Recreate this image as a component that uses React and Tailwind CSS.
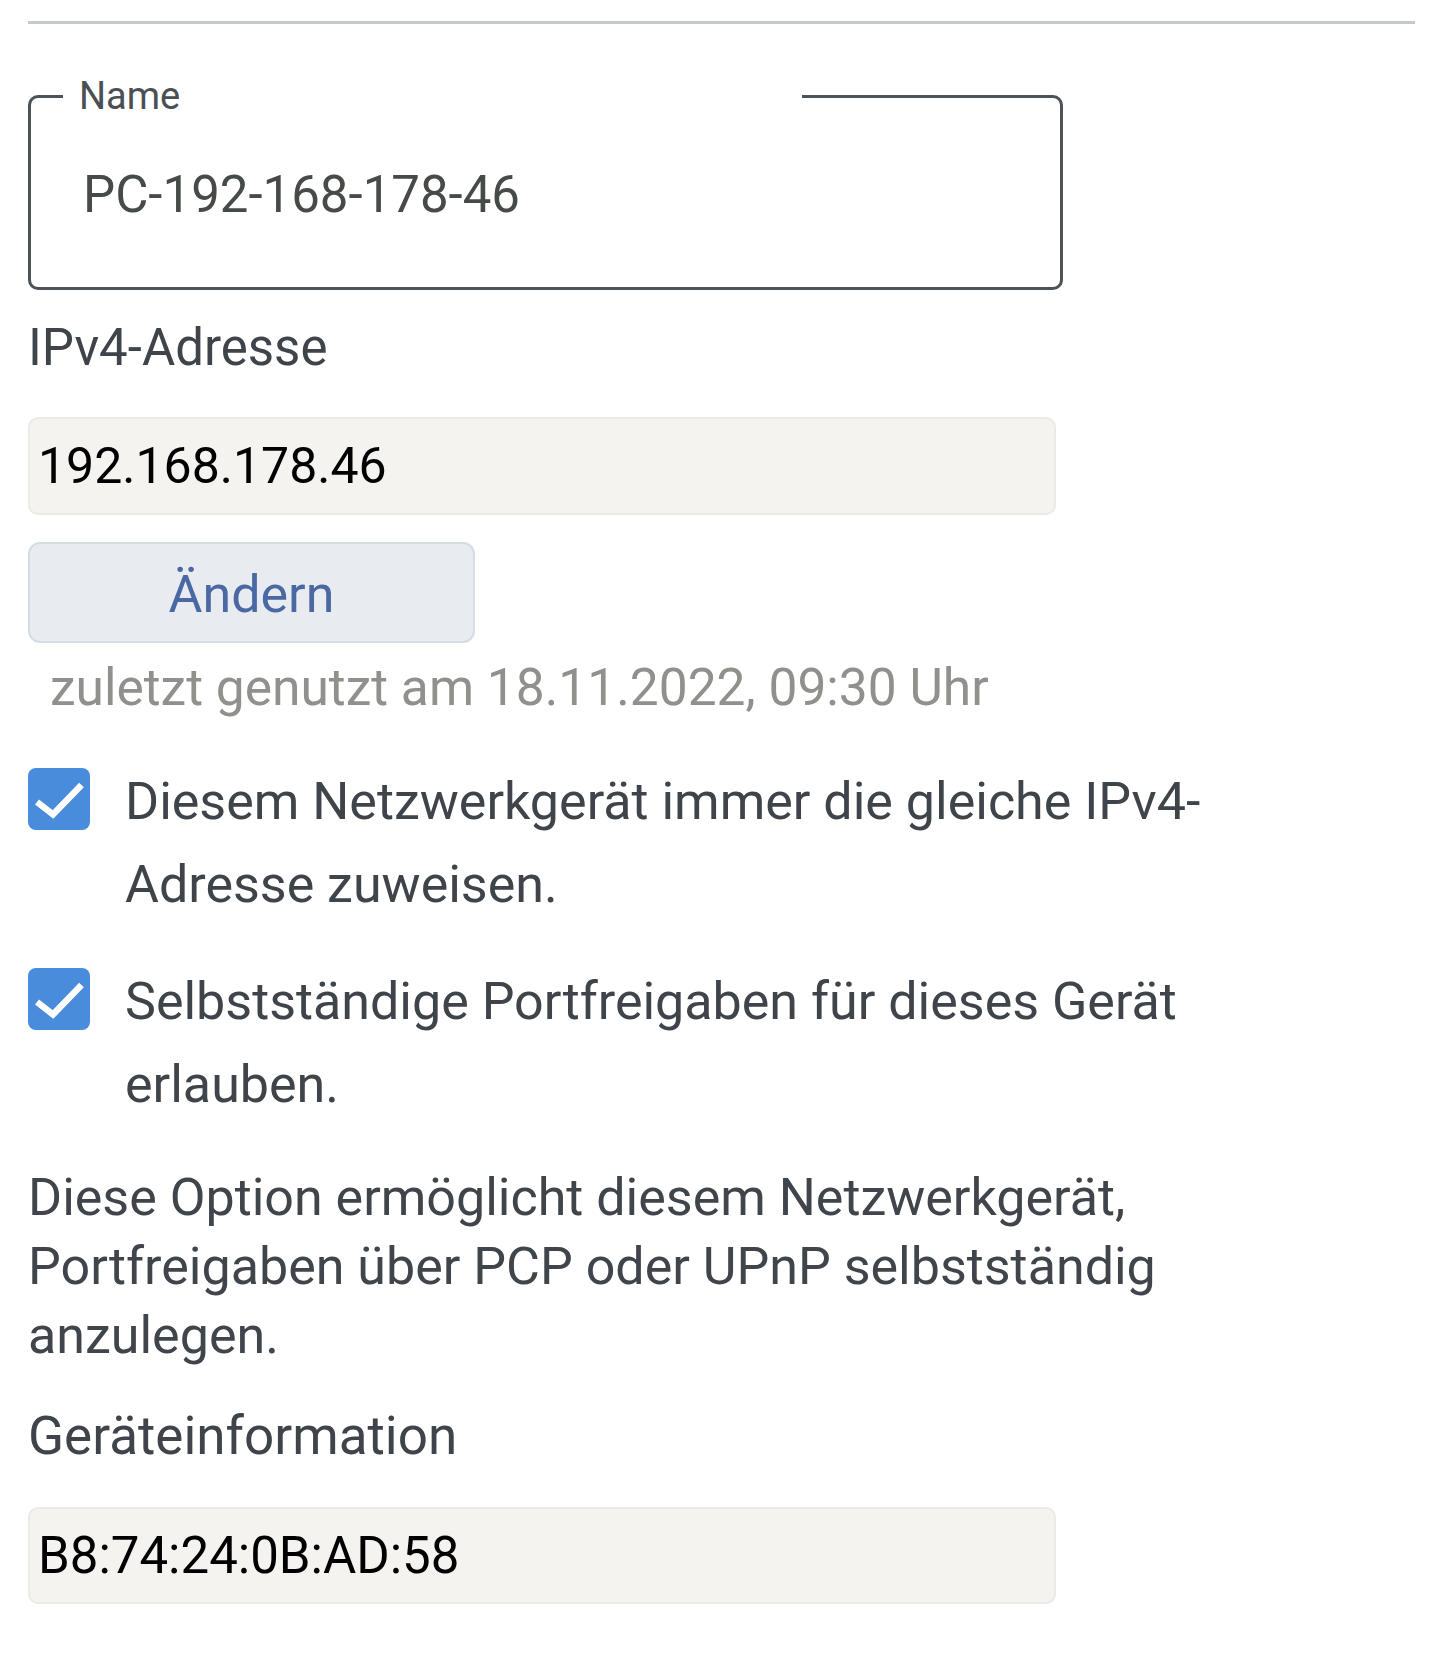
import React, { useState } from "react";

function Checkbox({ checked, onChange }) {
  return (
    <span
      role="checkbox"
      aria-checked={checked}
      onClick={() => onChange(!checked)}
      className={`mt-[8px] shrink-0 w-[62px] h-[62px] rounded-[8px] flex items-center justify-center cursor-pointer ${checked ? "bg-[#4a8cdc]" : "bg-white border-2 border-[#8a9097]"}`}
    >
      {checked ? (
        <svg viewBox="0 0 62 62" className="w-[62px] h-[62px]">
          <path d="M9 34 L25 46.5 L53.5 17" fill="none" stroke="#ffffff" strokeWidth="6.5" />
        </svg>
      ) : ""}
    </span>
  );
}

function App() {
  const [sameIp, setSameIp] = useState(true)
  const [portShare, setPortShare] = useState(true)

  return (
    <div className="min-h-[1655px] bg-white font-['Roboto',_'Liberation_Sans',_sans-serif] pl-[28px] pr-[24px] pt-[21px]">
      <div className="h-[3px] bg-[#c4caca]"></div>

      <div className="relative mt-[71px] w-[1035px] h-[195px] border-[3px] border-[#4d5258] rounded-[10px] flex items-center">
        <span className="absolute -top-[22px] left-[32px] w-[739px] bg-white pl-[16px] text-[38px] leading-[40px] text-[#4a4f54]">Name</span>
        <span className="pl-[52px] pt-[4px] text-[51px] leading-[60px] text-[#464b47]">PC-192-168-178-46</span>
      </div>

      <p className="mt-[28px] text-[51px] leading-[60px] text-[#3e444a]">IPv4-Adresse</p>
      <div className="mt-[39px] w-[1028px] h-[98px] rounded-[10px] border-2 border-[#ebeae6] bg-[#f4f3f0] flex items-center pl-[8px] text-[50px] leading-[60px] text-black">
        192.168.178.46
      </div>

      <button className="block mt-[27px] w-[447px] h-[101px] rounded-[12px] border-2 border-[#d5dde4] bg-[#e8ecf0] pt-[4px] text-[52px] leading-[60px] text-[#4a68a3] cursor-pointer">
        Ändern
      </button>
      <p className="mt-[15px] ml-[22px] text-[51.5px] leading-[60px] text-[#90908c]">zuletzt genutzt am 18.11.2022, 09:30 Uhr</p>

      <div className="mt-[42px] flex items-start gap-[35px]">
        <Checkbox checked={sameIp} onChange={setSameIp} />
        <p className="text-[52px] leading-[83px] text-[#3e444a]">Diesem Netzwerkgerät immer die gleiche IPv4-<br />Adresse zuweisen.</p>
      </div>
      <div className="mt-[34px] flex items-start gap-[35px]">
        <Checkbox checked={portShare} onChange={setPortShare} />
        <p className="text-[52px] leading-[83px] text-[#3e444a]">Selbstständige Portfreigaben für dieses Gerät<br />erlauben.</p>
      </div>

      <p className="mt-[37px] text-[52px] leading-[69px] text-[#3f454b]">
        Diese Option ermöglicht diesem Netzwerkgerät,<br />
        Portfreigaben über PCP oder UPnP selbstständig<br />
        anzulegen.
      </p>

      <p className="mt-[36px] text-[53px] leading-[60px] text-[#3e444a]">Geräteinformation</p>
      <div className="mt-[41px] w-[1028px] h-[97px] rounded-[10px] border-2 border-[#ebeae6] bg-[#f4f3f0] flex items-center pl-[8px] text-[51px] leading-[60px] text-black">
        B8:74:24:0B:AD:58
      </div>
    </div>
  );
}

export default App;
